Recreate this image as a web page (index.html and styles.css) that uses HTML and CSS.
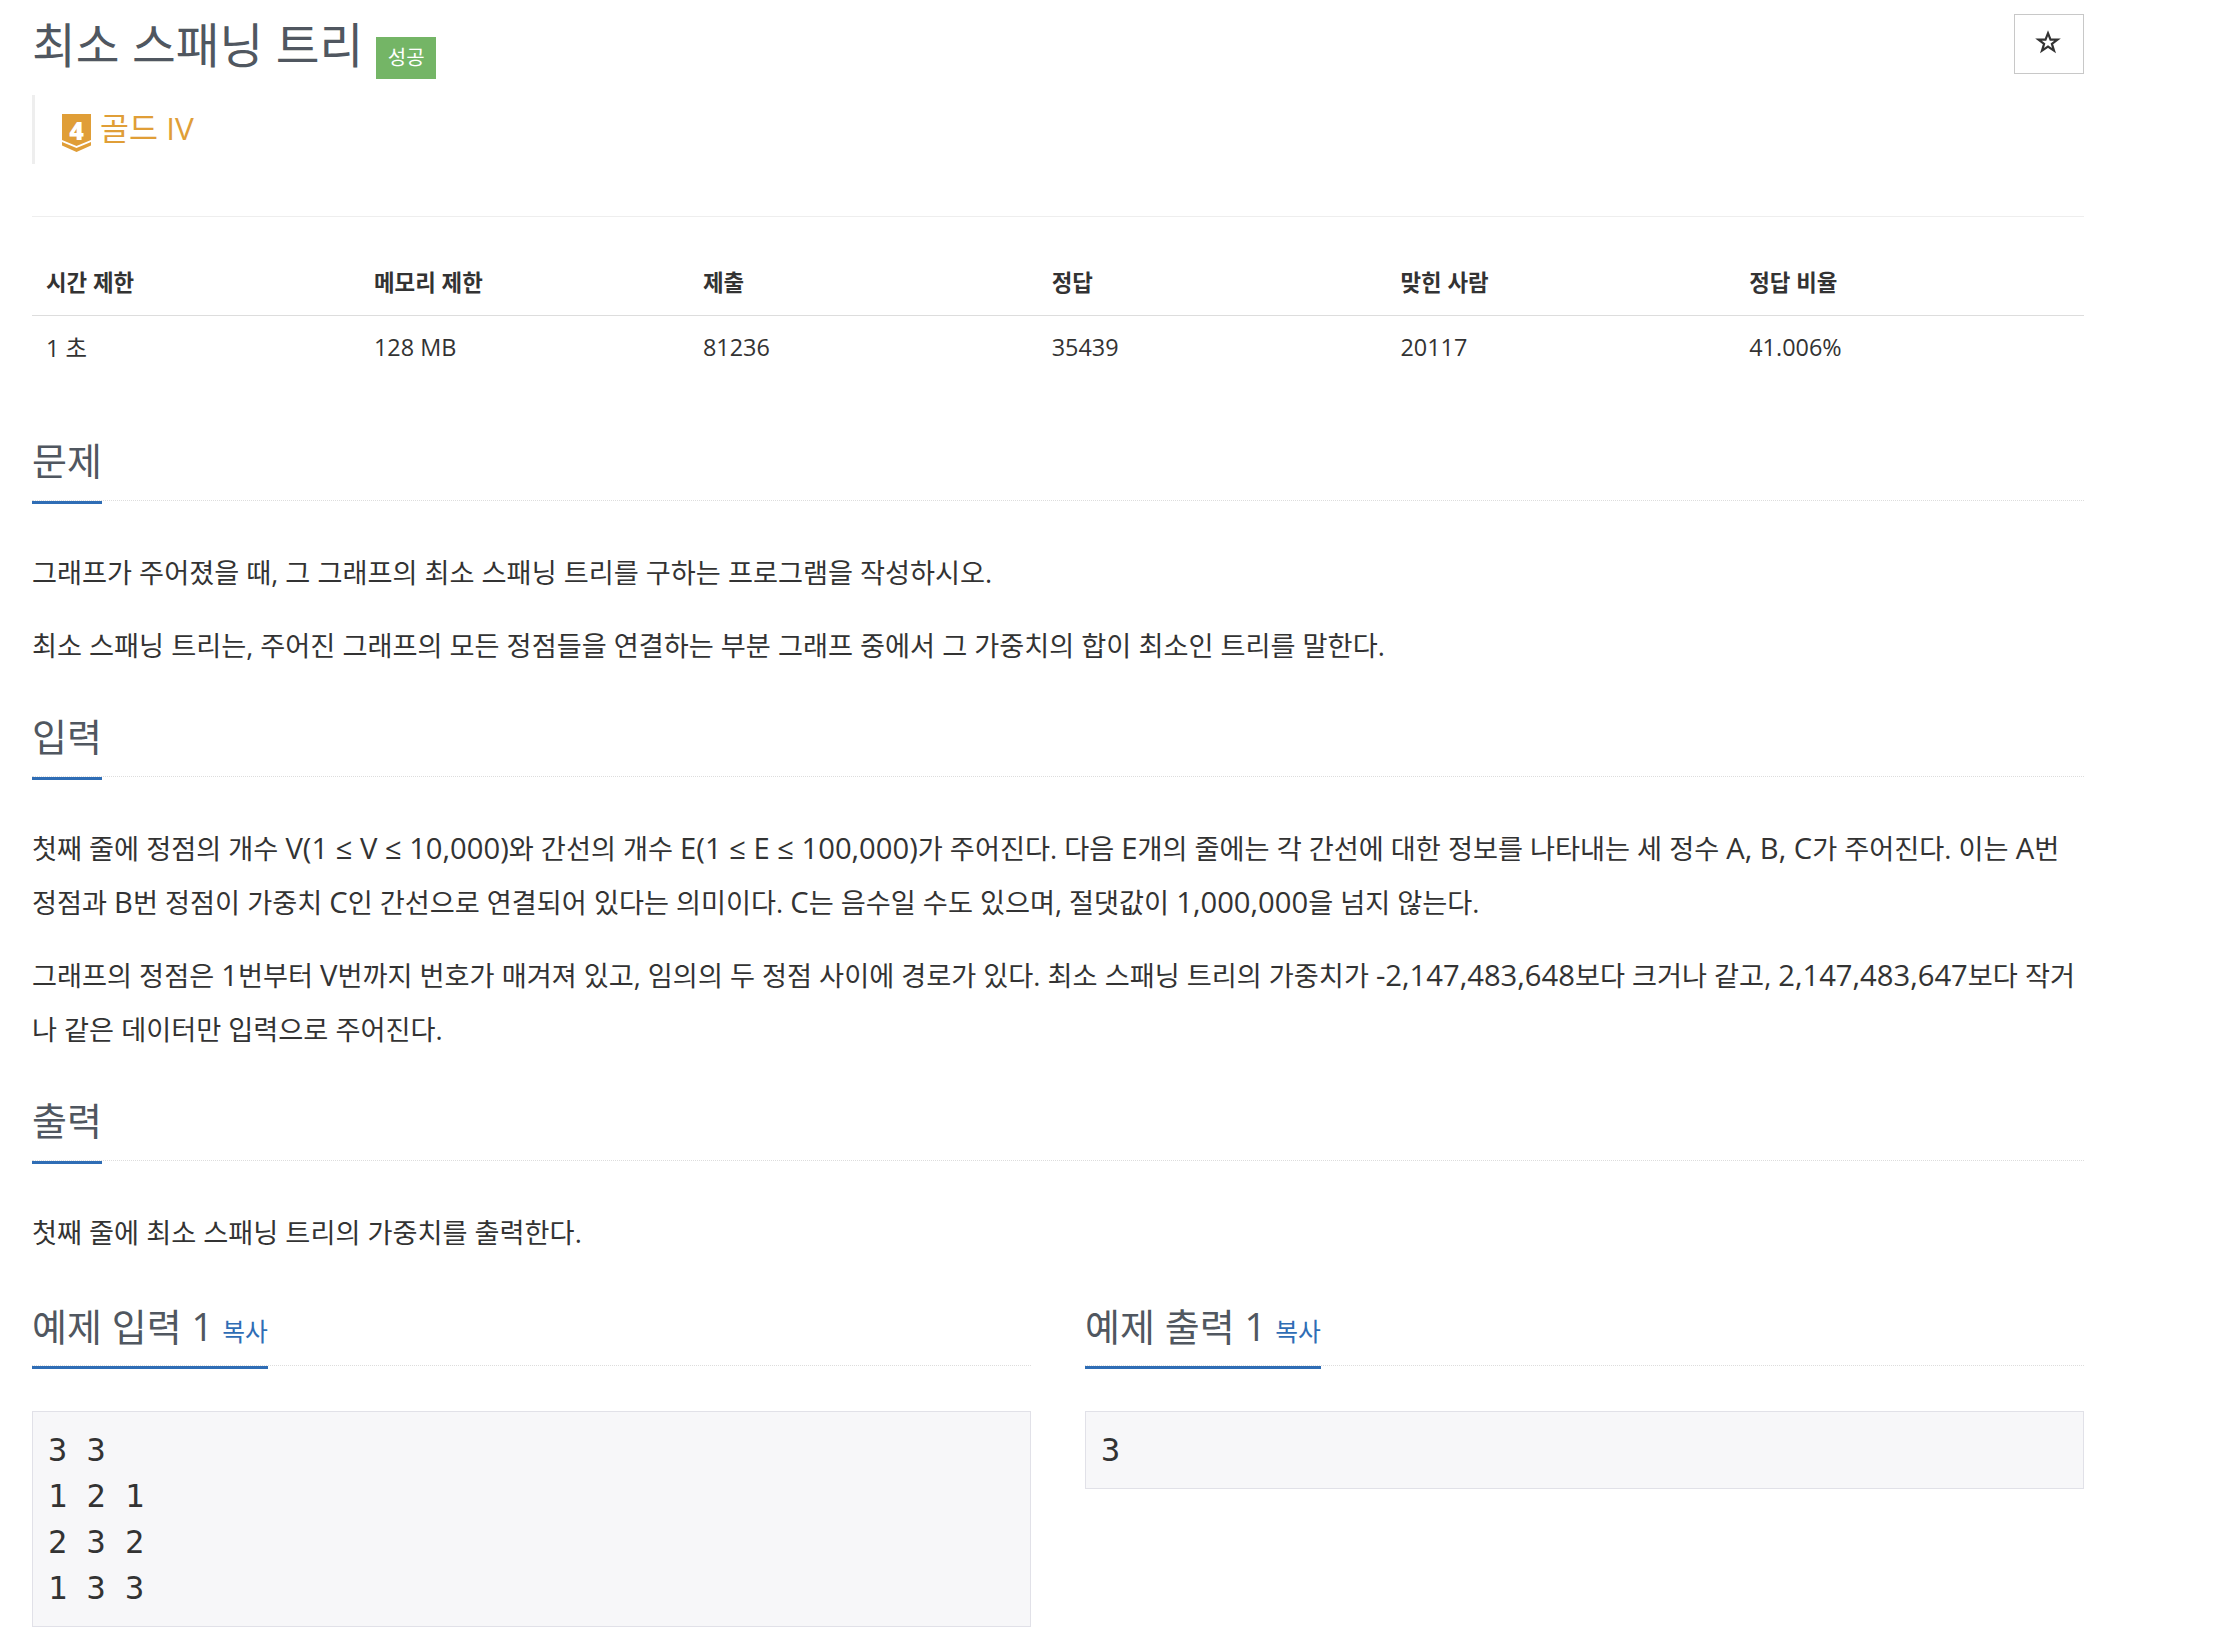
FILE: index.html
```html
<!DOCTYPE html>
<html lang="ko">
<head>
<meta charset="utf-8">
<title>최소 스패닝 트리</title>
<link rel="stylesheet" href="styles.css">
</head>
<body>
<main class="page">
  <header class="title-row">
    <h1 class="title"><span>최소 스패닝 트리</span><span class="badge">성공</span></h1>
    <button class="star" type="button" aria-label="즐겨찾기">
      <svg viewBox="0 0 26 24" width="26" height="24" aria-hidden="true"><path fill="none" stroke="#333" stroke-width="2.2" stroke-linejoin="miter" d="M13 3.2L15.5 9.6H22.5L16.9 13.8L19 20.6L13 16.5L7 20.6L9.1 13.8L3.5 9.6H10.5Z"/></svg>
    </button>
  </header>
  <blockquote class="tier">
    <div class="tier-icon">
      <svg viewBox="0 0 29 38" width="29" height="38" aria-hidden="true">
        <path fill="#e09e37" d="M0 0H29V26L14.5 32L0 26Z"/>
        <path fill="#e09e37" d="M0 28L14.5 34L29 28V31.5L14.5 38L0 31.5Z"/>
      </svg>
      <span class="tier-num">4</span>
    </div>
    <span class="tier-text">골드 IV</span>
  </blockquote>
  <hr class="divider">
  <table class="stats">
    <thead><tr><th>시간 제한</th><th>메모리 제한</th><th>제출</th><th>정답</th><th>맞힌 사람</th><th>정답 비율</th></tr></thead>
    <tbody><tr><td>1 초</td><td>128 MB</td><td>81236</td><td>35439</td><td>20117</td><td>41.006%</td></tr></tbody>
  </table>
  <section class="section first">
    <div class="headline"><h2>문제</h2></div>
    <p>그래프가 주어졌을 때, 그 그래프의 최소 스패닝 트리를 구하는 프로그램을 작성하시오.</p>
    <p>최소 스패닝 트리는, 주어진 그래프의 모든 정점들을 연결하는 부분 그래프 중에서 그 가중치의 합이 최소인 트리를 말한다.</p>
  </section>
  <section class="section">
    <div class="headline"><h2>입력</h2></div>
    <p>첫째 줄에 정점의 개수 <span class="lat">V(1 ≤ V ≤ 10,000)</span>와 간선의 개수 <span class="lat">E(1 ≤ E ≤ 100,000)</span>가 주어진다. 다음 <span class="lat">E</span>개의 줄에는 각 간선에 대한 정보를 나타내는 세 정수 <span class="lat">A, B, C</span>가 주어진다. 이는 <span class="lat">A</span>번 정점과 <span class="lat">B</span>번 정점이 가중치 <span class="lat">C</span>인 간선으로 연결되어 있다는 의미이다. <span class="lat">C</span>는 음수일 수도 있으며, 절댓값이 <span class="lat">1,000,000</span>을 넘지 않는다.</p>
    <p>그래프의 정점은 <span class="lat">1</span>번부터 <span class="lat">V</span>번까지 번호가 매겨져 있고, 임의의 두 정점 사이에 경로가 있다. 최소 스패닝 트리의 가중치가 <span class="lat">-2,147,483,648</span>보다 크거나 같고, <span class="lat">2,147,483,647</span>보다 작거나 같은 데이터만 입력으로 주어진다.</p>
  </section>
  <section class="section">
    <div class="headline"><h2>출력</h2></div>
    <p>첫째 줄에 최소 스패닝 트리의 가중치를 출력한다.</p>
  </section>
  <div class="samples">
    <section>
      <div class="headline"><h2>예제 입력 1 <a class="copy" href="#">복사</a></h2></div>
      <pre class="sample">3 3
1 2 1
2 3 2
1 3 3</pre>
    </section>
    <section>
      <div class="headline"><h2>예제 출력 1 <a class="copy" href="#">복사</a></h2></div>
      <pre class="sample">3</pre>
    </section>
  </div>
</main>
</body>
</html>
```
FILE: styles.css
```css
* { box-sizing: border-box; }
html, body { margin: 0; background: #fff; }
body {
  font-family: "Open Sans", "Noto Sans CJK KR", sans-serif;
  color: #333;
  font-size: 27.2px;
}
.page { margin-left: 32px; width: 2052px; height: 1650px; overflow: hidden; }
.title-row { display: flex; justify-content: space-between; align-items: flex-start; height: 95px; }
.title { margin: 0; padding-top: 15px; font-size: 47.6px; line-height: 60px; font-weight: 400; color: #505760; display: flex; align-items: flex-start; }
.badge { display: block; margin: 22px 0 0 13px; width: 60px; height: 42px; background: #74b566; color: #fff; font-size: 20px; font-weight: 400; line-height: 42px; text-align: center; }
.star { display: flex; align-items: center; justify-content: center; width: 70px; height: 60px; margin-top: 14px; background: #fff; border: 1px solid #c8c8c8; padding: 0 2px 4px 0; }
.tier { margin: 0; height: 69px; border-left: 3px solid #eee; padding: 19px 0 0 27px; display: flex; align-items: flex-start; }
.tier-icon { position: relative; flex: none; width: 29px; height: 38px; }
.tier-icon svg { display: block; }
.tier-num { position: absolute; left: 0; right: 0; top: 0; text-align: center; font: 800 25px/32px "Open Sans", sans-serif; color: #fff; }
.tier-text { margin: -10px 0 0 9px; color: #e09e37; font-size: 31.5px; line-height: 48px; }
.divider { margin: 52px 0 0; border: 0; border-top: 1px solid #eee; height: 0; }
.stats { width: 100%; border-collapse: collapse; table-layout: fixed; margin-top: 32px; font-size: 22.4px; }
.stats th, .stats td { text-align: left; padding: 0 14px; }
.stats th { height: 66px; font-weight: 700; border-bottom: 1px solid #ddd; }
.stats td { height: 63px; font-size: 23.4px; }
.stats th:nth-child(1) { width: 328px; }
.stats th:nth-child(2) { width: 329px; }
.section.first { margin-top: 55px; }
.headline { border-bottom: 1px dotted #ddd; height: 68px; }
.headline h2 { display: inline-block; margin: 0; height: 71px; border-bottom: 3px solid #2f6db5; font-size: 38px; line-height: 55px; font-weight: 400; color: #505760; }
.section p { margin: 0; line-height: 54px; }
.lat { font-size: 29.2px; line-height: 1; }
.section .headline { margin-bottom: 45px; }
.section p + p { margin-top: 19px; }
.section p:last-child { margin-bottom: 36px; }
.samples { display: grid; grid-template-columns: 999px 999px; column-gap: 54px; margin-top: 38px; }
.samples .headline h2 { line-height: 57px; }
.copy { color: #2f6db5; font-size: 24.8px; font-weight: 400; text-decoration: none; margin-left: -1px; }
.sample { margin: 45px 0 0; padding: 15px; background: #f7f7f9; border: 1px solid #e1e1e8; font: 32px/46px "DejaVu Sans Mono", monospace; color: #333; }
```
